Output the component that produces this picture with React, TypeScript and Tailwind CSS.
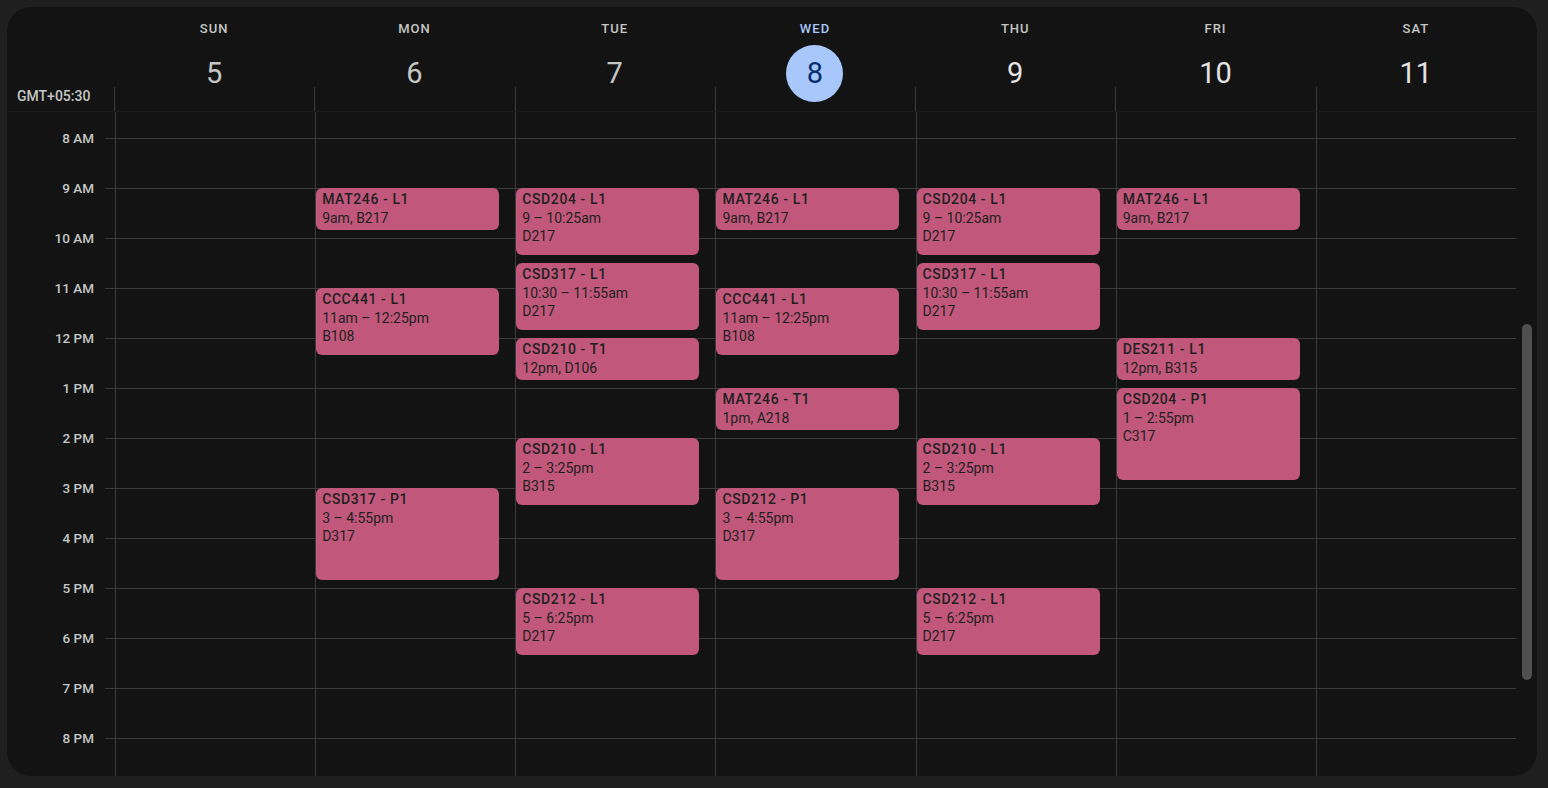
type Ev = { title: string; lines: string[]; start: number; mins: number };

const days = [
  { name: 'SUN', num: 5, past: true },
  { name: 'MON', num: 6, past: true },
  { name: 'TUE', num: 7, past: true },
  { name: 'WED', num: 8, today: true },
  { name: 'THU', num: 9 },
  { name: 'FRI', num: 10 },
  { name: 'SAT', num: 11 },
];

const hours = ['8 AM', '9 AM', '10 AM', '11 AM', '12 PM', '1 PM', '2 PM', '3 PM', '4 PM', '5 PM', '6 PM', '7 PM', '8 PM'];

const events: Ev[][] = [
  [],
  [
    { title: 'MAT246 - L1', lines: ['9am, B217'], start: 9, mins: 55 },
    { title: 'CCC441 - L1', lines: ['11am – 12:25pm', 'B108'], start: 11, mins: 85 },
    { title: 'CSD317 - P1', lines: ['3 – 4:55pm', 'D317'], start: 15, mins: 115 },
  ],
  [
    { title: 'CSD204 - L1', lines: ['9 – 10:25am', 'D217'], start: 9, mins: 85 },
    { title: 'CSD317 - L1', lines: ['10:30 – 11:55am', 'D217'], start: 10.5, mins: 85 },
    { title: 'CSD210 - T1', lines: ['12pm, D106'], start: 12, mins: 55 },
    { title: 'CSD210 - L1', lines: ['2 – 3:25pm', 'B315'], start: 14, mins: 85 },
    { title: 'CSD212 - L1', lines: ['5 – 6:25pm', 'D217'], start: 17, mins: 85 },
  ],
  [
    { title: 'MAT246 - L1', lines: ['9am, B217'], start: 9, mins: 55 },
    { title: 'CCC441 - L1', lines: ['11am – 12:25pm', 'B108'], start: 11, mins: 85 },
    { title: 'MAT246 - T1', lines: ['1pm, A218'], start: 13, mins: 55 },
    { title: 'CSD212 - P1', lines: ['3 – 4:55pm', 'D317'], start: 15, mins: 115 },
  ],
  [
    { title: 'CSD204 - L1', lines: ['9 – 10:25am', 'D217'], start: 9, mins: 85 },
    { title: 'CSD317 - L1', lines: ['10:30 – 11:55am', 'D217'], start: 10.5, mins: 85 },
    { title: 'CSD210 - L1', lines: ['2 – 3:25pm', 'B315'], start: 14, mins: 85 },
    { title: 'CSD212 - L1', lines: ['5 – 6:25pm', 'D217'], start: 17, mins: 85 },
  ],
  [
    { title: 'MAT246 - L1', lines: ['9am, B217'], start: 9, mins: 55 },
    { title: 'DES211 - L1', lines: ['12pm, B315'], start: 12, mins: 55 },
    { title: 'CSD204 - P1', lines: ['1 – 2:55pm', 'C317'], start: 13, mins: 115 },
  ],
  [],
];

// 8 AM line sits 26px below the top of the scrolled grid, 50px per hour
const topFor = (h: number) => 26 + (h - 8) * 50;

const App = () => {
  return (
    <div
      className="w-[1548px] h-[788px] bg-[#1f1f1f] pt-[7px] pl-[7px] pr-[11px] pb-[12px]"
      style={{ fontFamily: 'Roboto, "Liberation Sans", sans-serif' }}
    >
      <div className="h-full rounded-[24px] bg-[#131313] overflow-hidden flex flex-col">
        {/* header */}
        <div className="h-[105px] flex shrink-0 border-b border-[#1a1a1a]">
          <div className="w-[107px] flex items-end justify-start pl-[10px] pb-[7px]">
            <span className="text-[14px] leading-[16px] font-medium text-[#c4c7c5]">GMT+05:30</span>
          </div>
          <div className="flex-1 flex">
            {days.map((d) => (
              <div key={d.name} className="flex-1 relative flex flex-col items-center pt-[14px]">
                <div
                  className={`text-[13px] leading-[16px] font-medium tracking-[1px] ${
                    d.today ? 'text-[#a8c7fa]' : 'text-[#c4c7c5]'
                  }`}
                >
                  {d.name}
                </div>
                <div
                  className={`mt-[8px] w-[57px] h-[57px] rounded-full flex items-center justify-center text-[29px] ${
                    d.today ? 'bg-[#a8c7fa] text-[#062e6f]' : d.past ? 'text-[#c4c7c5]' : 'text-[#e3e3e3]'
                  }`}
                >
                  {d.num}
                </div>
                <div className="absolute left-0 bottom-0 h-[24px] w-px bg-[#3c3c3c]" />
              </div>
            ))}
          </div>
          <div className="w-[21px]" />
        </div>

        {/* body */}
        <div className="flex-1 flex overflow-hidden">
          <div className="w-[108px] shrink-0 flex flex-col">
            <div className="h-[26px] shrink-0" />
            {hours.map((h) => (
              <div key={h} className="h-[50px] shrink-0 flex justify-end items-start">
                <span className="-mt-[9px] mr-[11px] text-[13.5px] leading-[18px] font-medium text-[#c4c7c5]">{h}</span>
                <div className="w-[10px] border-t border-[#3a3a3a]" />
              </div>
            ))}
          </div>

          <div className="flex-1 flex">
            {events.map((col, i) => (
              <div key={i} className="flex-1 relative border-l border-[#3c3c3c] flex flex-col">
                <div className="h-[26px] shrink-0" />
                {hours.map((h) => (
                  <div key={h} className="h-[50px] shrink-0 border-t border-[#3a3a3a]" />
                ))}
                {col.map((e) => (
                  <div
                    key={e.title + e.start}
                    className="absolute left-0 w-[183px] rounded-[6px] bg-[#c1577a] px-[6px] pt-[2px] text-[14px] leading-[18.5px] text-[#1f1f1f] overflow-hidden"
                    style={{ top: topFor(e.start), height: (e.mins * 50) / 60 - 4 }}
                  >
                    <div className="font-medium tracking-[0.6px]">{e.title}</div>
                    {e.lines.map((l) => (
                      <div key={l}>{l}</div>
                    ))}
                  </div>
                ))}
              </div>
            ))}
          </div>

          <div className="w-[21px] shrink-0 pt-[212px] pl-[6px]">
            <div className="w-[10px] h-[356px] rounded-full bg-[#4f4f4f]" />
          </div>
        </div>
      </div>
    </div>
  );
};

export default App;
